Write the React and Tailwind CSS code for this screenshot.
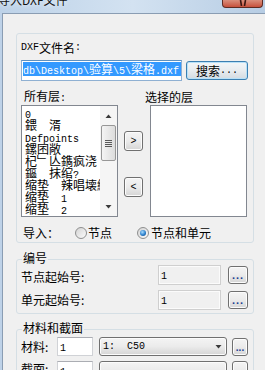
import React from "react";

const btn =
  "rounded-[3px] border border-[#707070] bg-linear-to-b from-[#f4f4f4] via-[#ebebeb] to-[#d5d5d5] shadow-[inset_0_0_0_1px_#fcfcfc]";

// SimSun-like mix: half-width latin, full-width han
function Sim({ text }) {
  const parts = text.match(/[\x00-\x7f]+|[^\x00-\x7f]+/g) || [];
  return parts.map((p, i) =>
    /^[\x00-\x7f]/.test(p) ? (
      <span key={i} className="font-['Liberation_Mono',monospace] text-[10px]">
        {p}
      </span>
    ) : (
      <span key={i} className="text-[12px]">
        {p}
      </span>
    )
  );
}

const layers = [
  "0",
  "鍡　湑",
  "Defpoints",
  "鏍囨敞",
  "杞﹂亾鐫疯浇",
  "鏂　抹绾?",
  "缩垫　辣唱壊綖",
  "缩垫　1",
  "缩垫　2",
];

function Tri({ down }) {
  return (
    <svg width="7" height="4" viewBox="0 0 7 4">
      <polygon points={down ? "0.5,0 6.5,0 3.5,3.5" : "0.5,4 6.5,4 3.5,0.5"} fill="#3a3a3a" />
    </svg>
  );
}

function Dots() {
  return (
    <button className={`${btn} w-[20px] h-[18px] flex items-end justify-center pb-[2px]`}>
      <span className="font-['Liberation_Sans',sans-serif] text-[11px] font-bold leading-none tracking-[1px] text-[#1b3d92]">
        ...
      </span>
    </button>
  );
}

function Radio({ checked }) {
  return (
    <span className="w-[12px] h-[12px] rounded-full border border-[#8e8f8f] bg-linear-to-br from-[#d4d4d4] to-[#fbfbfb] flex items-center justify-center">
      {checked && (
        <span className="w-[6px] h-[6px] rounded-full bg-[radial-gradient(circle_at_40%_35%,#a8ddff,#2a7fcc_55%,#0b3f78)]" />
      )}
    </span>
  );
}

function Group({ label, className, children }) {
  return (
    <div className={`relative w-[238px] rounded-[3px] border border-[#d5dfe5] ${className}`}>
      <span className="absolute -top-[9px] left-[5px] px-[1px] bg-[#f0f0f0] leading-[14px]">{label}</span>
      {children}
    </div>
  );
}

export default function App() {
  return (
    <div className="w-[265px] h-[370px] overflow-hidden flex flex-col bg-[#bed2e8] font-['Noto_Sans_CJK_SC',sans-serif] text-[12px] text-black">
      {/* title bar */}
      <div className="h-[13px] flex overflow-hidden bg-linear-to-r from-[#bdd2e8] via-[#d3e2f1] to-[#b7cde4]">
        <span className="-mt-[6px] -ml-[2px] leading-[12px] whitespace-nowrap text-[#111] [text-shadow:0_0_5px_#fff]">
          导入DXF文件
        </span>
        <div className="ml-auto mr-[2px] w-[41px] h-[8px] rounded-b-[4px] border border-t-0 border-[#5e2b23] bg-linear-to-b from-[#d98e7c] to-[#c6503c] flex justify-center">
          <svg width="8" height="6" viewBox="0 0 8 6">
            <path d="M1.5 0 L2.5 6 M6.5 0 L5.5 6" stroke="#3a1510" strokeWidth="1.6" />
          </svg>
        </div>
      </div>

      <div className="flex flex-1 min-h-0">
        <div className="w-[2px]" />
        <div className="flex-1 bg-[#f0f0f0] border-l border-t border-[#8a9db3] pl-[13px] pt-[19px]">
          {/* file group */}
          <div className="w-[238px] h-[210px] rounded-[3px] border border-[#d5dfe5]">
            <div className="mt-[7px] h-[14px] pl-[4px] flex items-center leading-[14px]">
              <Sim text="DXF文件名:" />
            </div>
            <div className="mt-[5px] pl-[4px] flex items-center">
              <div className="w-[161px] h-[21px] border border-[#8fb0d2] border-t-[#5f91c0] bg-white pl-[1px] pt-[1px]">
                <div className="h-[14px] leading-[14px] bg-[#3399ff] text-white whitespace-nowrap overflow-hidden">
                  <Sim text="db\Desktop\验算\5\梁格.dxf" />
                </div>
              </div>
              <button className="ml-[4px] w-[62px] h-[19px] rounded-[3px] border border-[#3c7fb1] bg-linear-to-b from-[#f3f6f8] via-[#e8ecef] to-[#d3dbe2] shadow-[inset_0_0_0_1px_#b8e1f8] flex items-center pl-[9px] leading-[14px]">
                <Sim text="搜索..." />
              </button>
            </div>

            <div className="mt-[9px] h-[14px] flex items-center leading-[14px]">
              <span className="w-[128px] pl-[7px]">
                <Sim text="所有层:" />
              </span>
              <span>
                <Sim text="选择的层" />
              </span>
            </div>

            <div className="mt-[1px] h-[112px] pl-[4px] flex">
              <div className="w-[97px] border border-[#828790] bg-white flex">
                <div className="flex-1 min-w-0 overflow-hidden pl-[3px] pt-[1px]">
                  {layers.map((l) => (
                    <div key={l} className="h-[12px] leading-[12px] whitespace-nowrap">
                      <Sim text={l} />
                    </div>
                  ))}
                </div>
                <div className="w-[17px] flex flex-col bg-[#f5f5f5]">
                  <div className="h-[17px] flex items-center justify-center pt-[2px]">
                    <Tri />
                  </div>
                  <div className="flex-1 px-[1px] pt-[2px]">
                    <div className="h-[36px] rounded-[2px] border border-[#979797] bg-linear-to-r from-[#f4f4f4] to-[#dcdcdc] flex flex-col items-center justify-center gap-[1px]">
                      <span className="w-[7px] h-[1px] bg-[#5a5a5a]" />
                      <span className="w-[7px] h-[1px] bg-[#5a5a5a]" />
                      <span className="w-[7px] h-[1px] bg-[#5a5a5a]" />
                      <span className="w-[7px] h-[1px] bg-[#5a5a5a]" />
                    </div>
                  </div>
                  <div className="h-[17px] flex items-center justify-center pb-[2px]">
                    <Tri down />
                  </div>
                </div>
              </div>
              <div className="ml-[6px] w-[19px] flex flex-col">
                <button className={`${btn} mt-[26px] h-[20px] flex items-center justify-center`}>
                  <Sim text=">" />
                </button>
                <button className={`${btn} mt-[26px] h-[20px] flex items-center justify-center`}>
                  <Sim text="<" />
                </button>
              </div>
              <div className="ml-[7px] w-[97px] border border-[#828790] bg-white" />
            </div>

            <div className="mt-[8px] h-[16px] pl-[6px] flex items-center leading-[16px]">
              <span className="w-[52px]">导入：</span>
              <Radio />
              <span className="ml-[1px] w-[49px]">节点</span>
              <Radio checked />
              <span className="ml-[2px]">节点和单元</span>
            </div>
          </div>

          {/* numbering */}
          <Group label="编号" className="mt-[16px] pt-[5px] pb-[3px]">
            <div className="h-[20px] pl-[4px] flex items-center">
              <span className="w-[137px] pt-[4px]">节点起始号:</span>
              <div className="w-[63px] h-[20px] border border-[#cfcfcf] bg-[#f0f0f0] shadow-[inset_0_0_0_1px_#fbfbfb] pl-[2px] leading-[16px]">
                <Sim text="1" />
              </div>
              <div className="ml-[7px]">
                <Dots />
              </div>
            </div>
            <div className="mt-[5px] h-[20px] pl-[4px] flex items-center">
              <span className="w-[137px]">单元起始号:</span>
              <div className="w-[63px] h-[20px] border border-[#cfcfcf] bg-[#f0f0f0] shadow-[inset_0_0_0_1px_#fbfbfb] pl-[2px] leading-[16px]">
                <Sim text="1" />
              </div>
              <div className="ml-[7px]">
                <Dots />
              </div>
            </div>
          </Group>

          {/* material and section */}
          <Group label="材料和截面" className="mt-[15px] pt-[7px] h-[60px]">
            <div className="h-[19px] pl-[4px] flex items-center">
              <span className="w-[36px]">材料:</span>
              <div className="w-[36px] h-[19px] border border-[#d0d2d6] border-t-[#abadb3] bg-white pl-[2px] leading-[15px]">
                <Sim text="1" />
              </div>
              <div className={`${btn} ml-[6px] w-[128px] h-[19px] flex items-center pl-[3px] pr-[4px] leading-[15px] whitespace-pre`}>
                <Sim text="1:  C50" />
                <span className="ml-auto">
                  <Tri down />
                </span>
              </div>
              <div className="ml-[5px]">
                <button className={`${btn} w-[16px] h-[18px] flex items-end justify-center pb-[2px]`}>
                  <span className="font-['Liberation_Sans',sans-serif] text-[10px] font-bold leading-none text-[#1b3d92]">...</span>
                </button>
              </div>
            </div>
            <div className="mt-[5px] h-[19px] pl-[4px] flex items-start">
              <span className="w-[36px] leading-[16px]">截面:</span>
              <div className="w-[36px] h-[19px] border border-[#d0d2d6] border-t-[#abadb3] bg-white pl-[2px] leading-[15px]">
                <Sim text="1" />
              </div>
              <div className={`${btn} ml-[6px] w-[128px] h-[19px]`} />
              <div className={`${btn} ml-[5px] w-[16px] h-[18px]`} />
            </div>
          </Group>
        </div>
      </div>
    </div>
  );
}
